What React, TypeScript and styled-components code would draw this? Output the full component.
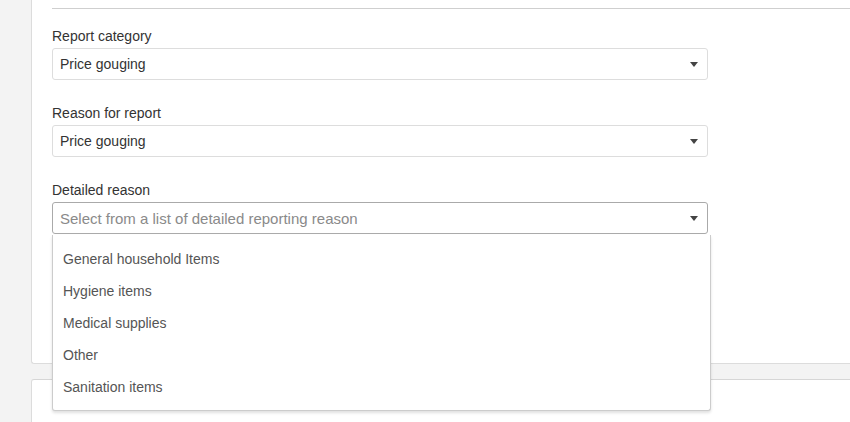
import React from "react";
import styled, { createGlobalStyle } from "styled-components";

const GlobalStyle = createGlobalStyle`
    html, body {
        margin: 0;
        padding: 0;
        background: #f3f3f3;
        font-family: "Liberation Sans", Arial, Helvetica, sans-serif;
        font-size: 14px;
        color: #333;
    }
    * {
        box-sizing: border-box;
    }
`;

const Page = styled.div`
    display: flex;
    flex-direction: column;
    height: 422px;
    padding-left: 31px;
    overflow: hidden;
`;

const Card = styled.div`
    height: 364px;
    background: #fff;
    border-left: 1px solid #dcdcdc;
    border-bottom: 1px solid #dcdcdc;
    border-bottom-left-radius: 3px;
    padding: 8px 0 0 20px;
    flex-shrink: 0;
`;

const NextCard = styled.div`
    flex: 1;
    margin-top: 15px;
    background: #fff;
    border-top: 1px solid #d6d6d6;
    border-left: 1px solid #dcdcdc;
    border-top-left-radius: 3px;
`;

const Divider = styled.div`
    border-top: 1px solid #cfcfcf;
    margin-bottom: 17px;
`;

const Form = styled.div`
    width: 656px;
`;

const Field = styled.div`
    position: relative;
    margin-bottom: 23px;
`;

const Label = styled.label`
    display: block;
    line-height: 20px;
    margin-bottom: 2px;
    color: #333;
`;

const SelectBox = styled.div<{ $open?: boolean }>`
    display: flex;
    align-items: center;
    justify-content: space-between;
    height: 32px;
    padding: 0 9px 0 7px;
    border: 1px solid ${(p) => (p.$open ? "#aaa" : "#ddd")};
    border-radius: 3px;
    background: #fff;
`;

const Value = styled.span<{ $placeholder?: boolean }>`
    color: ${(p) => (p.$placeholder ? "#8a8a8a" : "#333")};
    font-size: ${(p) => (p.$placeholder ? "15px" : "14px")};
`;

const Arrow = styled.span`
    width: 0;
    height: 0;
    border-left: 4px solid transparent;
    border-right: 4px solid transparent;
    border-top: 5px solid #444;
`;

const Menu = styled.div`
    position: absolute;
    top: 100%;
    left: 0;
    width: 659px;
    margin-top: 1px;
    padding: 8px 0 7px;
    background: #fff;
    border: 1px solid #ccc;
    border-top: none;
    border-radius: 0 0 3px 3px;
    box-shadow: 0 2px 3px rgba(0, 0, 0, 0.12);
    z-index: 10;
`;

const MenuItem = styled.div`
    height: 32px;
    line-height: 32px;
    padding: 0 10px;
    color: #555;
`;

const detailedReasons = [
    "General household Items",
    "Hygiene items",
    "Medical supplies",
    "Other",
    "Sanitation items",
];

export default function App() {
    return (
        <>
            <GlobalStyle />
            <Page>
                <Card>
                    <Divider />
                    <Form>
                        <Field>
                            <Label>Report category</Label>
                            <SelectBox>
                                <Value>Price gouging</Value>
                                <Arrow />
                            </SelectBox>
                        </Field>

                        <Field>
                            <Label>Reason for report</Label>
                            <SelectBox>
                                <Value>Price gouging</Value>
                                <Arrow />
                            </SelectBox>
                        </Field>

                        <Field>
                            <Label>Detailed reason</Label>
                            <SelectBox $open>
                                <Value $placeholder>Select from a list of detailed reporting reason</Value>
                                <Arrow />
                            </SelectBox>
                            <Menu>
                                {detailedReasons.map((r) => (
                                    <MenuItem key={r}>{r}</MenuItem>
                                ))}
                            </Menu>
                        </Field>
                    </Form>
                </Card>
                <NextCard />
            </Page>
        </>
    );
}
